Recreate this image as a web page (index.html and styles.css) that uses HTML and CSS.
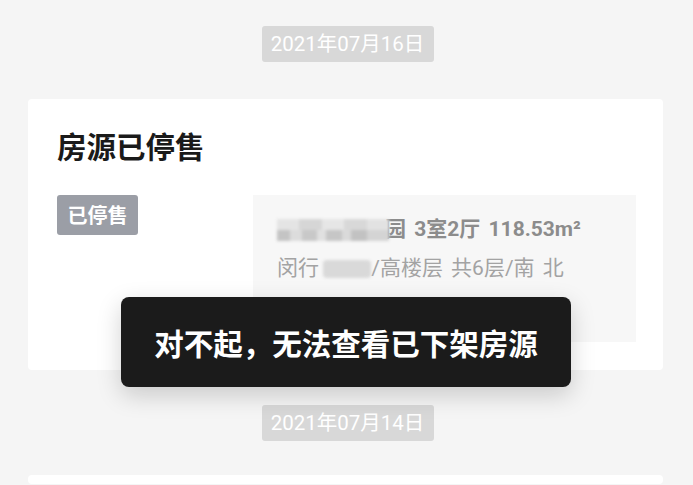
FILE: index.html
```html
<!DOCTYPE html>
<html lang="zh">
<head>
<meta charset="utf-8">
<link rel="stylesheet" href="styles.css">
</head>
<body>
<div class="page">
  <div class="date-row"><span class="date-pill">2021年07月16日</span></div>
  <div class="card">
    <div class="card-title">房源已停售</div>
    <div class="card-row">
      <span class="tag">已停售</span>
      <div class="house">
        <div class="house-name"><span class="mosaic mosaic-a"></span><span class="yuan">园</span> 3室2厅 118.53m²</div>
        <div class="house-info">闵行 <span class="mosaic mosaic-b"></span>/高楼层 共6层/南 北</div>
      </div>
    </div>
  </div>
  <div class="date-row date-row-2"><span class="date-pill">2021年07月14日</span></div>
  <div class="card card-next"></div>
</div>
<div class="toast">对不起，无法查看已下架房源</div>
</body>
</html>
```
FILE: styles.css
```css
html, body {
  margin: 0;
  padding: 0;
  background: #f5f5f5;
  font-family: "Noto Sans CJK SC", "Noto Sans", sans-serif;
  overflow: hidden;
}
.page {
  padding: 26px 30px 0 28px;
}
.date-row {
  display: flex;
  justify-content: center;
  padding-left: 4px;
}
.date-pill {
  display: block;
  width: 172px;
  height: 36px;
  box-sizing: border-box;
  background: #d8d8d8;
  border-radius: 3px;
  color: #ffffff;
  font-family: Roboto, "Noto Sans CJK SC", sans-serif;
  font-size: 20.5px;
  line-height: 36px;
  text-align: center;
  white-space: nowrap;
}
.card {
  margin-top: 37px;
  background: #ffffff;
  border-radius: 4px;
  padding: 26px 27px 28px 29px;
}
.card-title {
  font-size: 29.5px;
  font-weight: 700;
  line-height: 41px;
  color: #1a1a1a;
}
.card-row {
  margin-top: 29px;
  display: flex;
  justify-content: space-between;
  align-items: flex-start;
}
.tag {
  display: block;
  width: 81px;
  height: 40px;
  background: #9b9ea6;
  color: #ffffff;
  border-radius: 3px;
  font-size: 20px;
  font-weight: 700;
  line-height: 40px;
  text-align: center;
}
.house {
  width: 383px;
  height: 147px;
  box-sizing: border-box;
  background: #f7f7f7;
  padding: 15px 0 0 24px;
}
.house-name {
  font-family: Roboto, "Noto Sans CJK SC", sans-serif;
  font-size: 21px;
  font-weight: 700;
  color: #8c8c8c;
  line-height: 38px;
  white-space: nowrap;
  word-spacing: 3px;
}
.house-info {
  font-family: Roboto, "Noto Sans CJK SC", sans-serif;
  font-size: 21px;
  color: #a3a3a3;
  line-height: 40px;
  white-space: nowrap;
  word-spacing: 3px;
}
.mosaic {
  display: inline-block;
  vertical-align: middle;
  filter: blur(1.5px);
}
.mosaic-a {
  width: 112px;
  height: 22px;
  margin-right: -4px;
  background:
    linear-gradient(90deg, #c4c4c4 0 12%, #dcdcdc 12% 22%, #c8c8c8 22% 36%, #e0e0e0 36% 44%, #c6c6c6 44% 58%, #dadada 58% 66%, #c2c2c2 66% 80%, #d4d4d4 80% 100%) bottom / 100% 50% no-repeat,
    linear-gradient(90deg, #e4e4e4 0 20%, #d6d6d6 20% 40%, #e6e6e6 40% 60%, #d8d8d8 60% 80%, #e2e2e2 80% 100%) top / 100% 50% no-repeat;
}
.mosaic-b {
  width: 48px;
  height: 18px;
  margin-left: -4px;
  background: #d9d9d9;
  border-radius: 4px;
}
.yuan {
  color: #8c8c8c;
}
.date-row-2 {
  margin-top: 35px;
}
.card-next {
  margin-top: 34px;
  height: 9px;
  padding: 0;
}
.toast {
  position: absolute;
  left: 121px;
  top: 297px;
  width: 450px;
  height: 90px;
  background: #1b1b1b;
  border-radius: 8px;
  color: #ffffff;
  font-size: 29.5px;
  font-weight: 700;
  line-height: 90px;
  text-align: center;
  white-space: nowrap;
  box-shadow: 0 8px 24px rgba(0, 0, 0, 0.18);
}
```
